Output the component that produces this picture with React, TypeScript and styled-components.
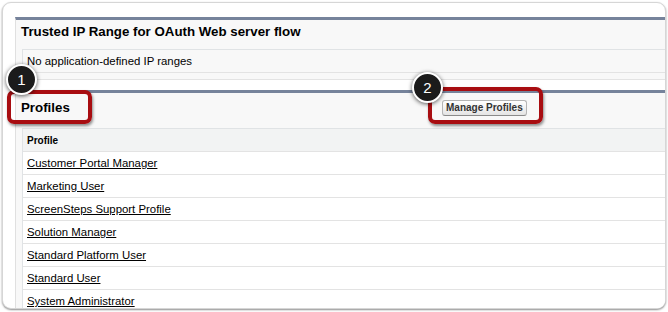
import React from "react";
import styled, { createGlobalStyle } from "styled-components";

const GlobalStyle = createGlobalStyle`
  html, body {
    margin: 0;
    padding: 0;
    background: #ffffff;
  }
  body {
    font-family: "Liberation Sans", Arial, sans-serif;
    color: #000;
  }
`;

const Stage = styled.div`
  position: relative;
  width: 668px;
  height: 312px;
  overflow: hidden;
`;

const Frame = styled.div`
  box-sizing: border-box;
  margin: 2px 0 0 2px;
  width: 664px;
  height: 307px;
  border: 1px solid #d6d6d6;
  border-radius: 9px;
  box-shadow: 0 1px 2px rgba(0, 0, 0, 0.45);
  background: #ffffff;
  overflow: hidden;
  padding: 14px 0 0 12px;
`;

const Block = styled.section`
  background: #f8f8f8;
  border-top: 3px solid #76839b;
  border-left: 1px solid #e0e0e0;
  border-bottom: 1px solid #e3e3e3;
  margin-right: -12px;

  & + & {
    margin-top: 10px;
  }
`;

const BlockHeader = styled.div<{ $height: number }>`
  box-sizing: border-box;
  display: grid;
  grid-template-columns: 421px 1fr;
  align-items: center;
  height: ${(p) => p.$height}px;
  padding: 0 0 6px 5px;
`;

const Title = styled.h2`
  margin: 0;
  font-size: 13.3px;
  line-height: 16px;
  font-weight: bold;
  color: #000;
  white-space: nowrap;
`;

const ButtonCell = styled.div`
  display: flex;
  align-items: center;
`;

const Btn = styled.button`
  box-sizing: border-box;
  height: 16px;
  padding: 1px 3px;
  font-family: "Liberation Sans", Arial, sans-serif;
  font-size: 10px;
  font-weight: bold;
  line-height: 12px;
  color: #333;
  border: 1px solid #b5b5b5;
  border-bottom-color: #8a8a8a;
  border-radius: 3px;
  background: linear-gradient(#ffffff, #e4e4e4);
`;

const Table = styled.div<{ $gap?: number }>`
  margin: 0 0 ${(p) => p.$gap ?? 0}px 6px;
  border-top: 1px solid #e0e3e5;
  border-left: 1px solid #e0e3e5;
`;

const Row = styled.div<{ $tone: "plain" | "head" | "data" }>`
  height: 22px;
  display: flex;
  align-items: center;
  padding-left: 4px;
  border-bottom: 1px solid #e3e3e3;
  font-size: ${(p) => (p.$tone === "head" ? 10 : 11.4)}px;
  font-weight: ${(p) => (p.$tone === "head" ? "bold" : "normal")};
  background: ${(p) =>
    p.$tone === "head" ? "#f2f3f3" : p.$tone === "data" ? "#ffffff" : "#f8f8f8"};
`;

const Link = styled.a`
  color: #000;
  text-decoration: underline;
`;

const Callout = styled.div<{ $x: number; $y: number; $w: number; $h: number }>`
  position: absolute;
  left: ${(p) => p.$x}px;
  top: ${(p) => p.$y}px;
  width: ${(p) => p.$w}px;
  height: ${(p) => p.$h}px;
  box-sizing: border-box;
  border: 4px solid #a80d11;
  border-radius: 7px;
  box-shadow: 1px 2px 3px rgba(0, 0, 0, 0.45);
`;

const Marker = styled.div<{ $x: number; $y: number }>`
  position: absolute;
  left: ${(p) => p.$x}px;
  top: ${(p) => p.$y}px;
  width: 31px;
  height: 31px;
  box-sizing: border-box;
  border: 2px solid #ffffff;
  border-radius: 50%;
  background: #1b1b1b;
  box-shadow: 0 1px 4px rgba(0, 0, 0, 0.65);
  color: #ffffff;
  font-size: 15px;
  display: flex;
  align-items: center;
  justify-content: center;
`;

const profiles = [
  "Customer Portal Manager",
  "Marketing User",
  "ScreenSteps Support Profile",
  "Solution Manager",
  "Standard Platform User",
  "Standard User",
  "System Administrator",
];

export default function App() {
  return (
    <Stage>
      <GlobalStyle />
      <Frame>
        <Block>
          <BlockHeader $height={29}>
            <Title>Trusted IP Range for OAuth Web server flow</Title>
          </BlockHeader>
          <Table $gap={6}>
            <Row $tone="plain">No application-defined IP ranges</Row>
          </Table>
        </Block>

        <Block>
          <BlockHeader $height={35}>
            <Title>Profiles</Title>
            <ButtonCell>
              <Btn>Manage Profiles</Btn>
            </ButtonCell>
          </BlockHeader>
          <Table>
            <Row $tone="head">Profile</Row>
            {profiles.map((name) => (
              <Row $tone="data" key={name}>
                <Link href="#">{name}</Link>
              </Row>
            ))}
          </Table>
        </Block>
      </Frame>

      <Callout $x={7} $y={90} $w={85} $h={34} />
      <Callout $x={428} $y={87} $w={115} $h={37} />
      <Marker $x={6} $y={64}>1</Marker>
      <Marker $x={412} $y={72}>2</Marker>
    </Stage>
  );
}
